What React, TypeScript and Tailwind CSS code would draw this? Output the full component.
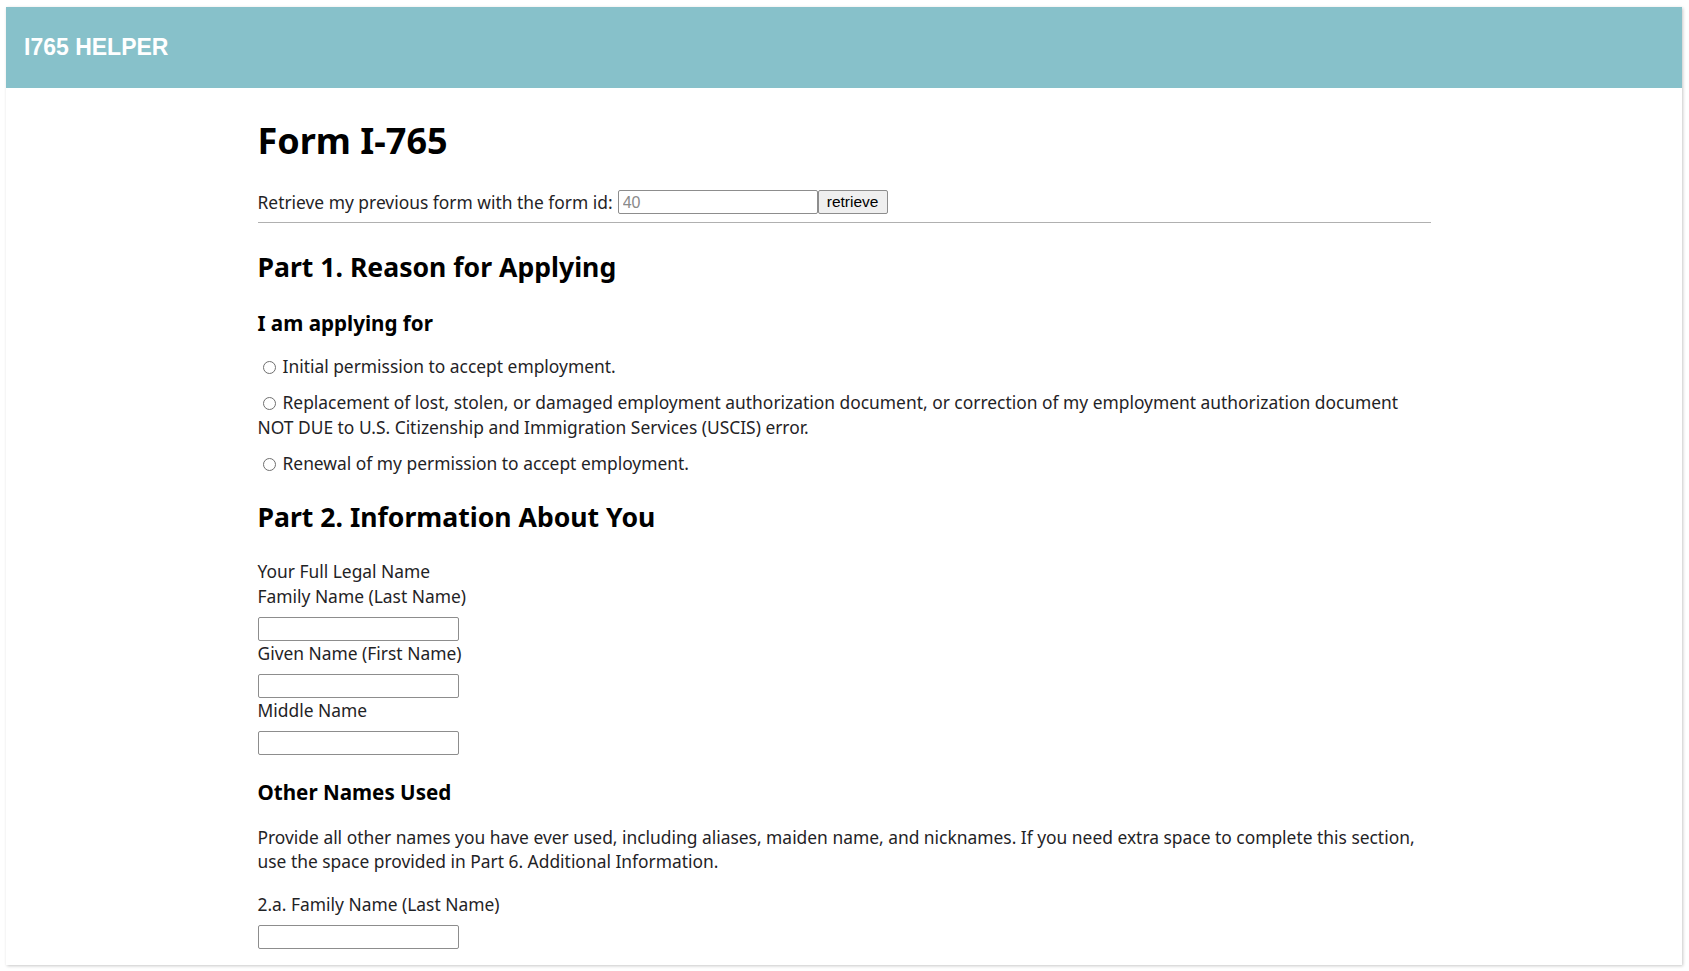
import React from "react";

const Label = ({ children, className = "" }: { children: React.ReactNode; className?: string }) => (
  <div className={className}>{children}</div>
);

const TextBox = ({ className = "" }: { className?: string }) => (
  <input
    type="text"
    className={`block w-[201px] h-[24px] border border-[#8d8d8d] rounded-[2px] bg-white px-[3px] outline-none ${className}`}
  />
);

const Radio = ({ name }: { name: string }) => (
  <input
    type="radio"
    name={name}
    className="appearance-none inline-block w-[13px] h-[13px] rounded-full border border-[#6f6f6f] bg-white align-[-1px] ml-[5px] mr-[7px] m-0"
  />
);

export default function App() {
  return (
    <div className="w-full h-[971px] overflow-hidden bg-white pt-[7px] pl-[6px] pr-[7px]">
      <div className="h-[958px] bg-white overflow-hidden shadow-[1px_1px_3px_rgba(0,0,0,0.22)]">
        <header className="h-[81px] bg-[#87c1ca] flex items-center pl-[18px]">
          <span className="font-['Liberation_Sans',Arial,sans-serif] font-bold text-[23px] text-white">
            I765 HELPER
          </span>
        </header>

        <main className="mx-auto w-[1173px] font-['Noto_Sans',sans-serif] text-[17.4px] leading-[25px] text-[#1f2326]">
          <h1 className="mt-[31px] text-[36px] leading-[44px] font-bold text-black">Form I-765</h1>

          <div className="mt-[27px] flex items-center h-[24px]">
            <span className="whitespace-nowrap">Retrieve my previous form with the form id:</span>
            <input
              type="text"
              placeholder="40"
              className="ml-[5px] w-[200px] h-[24px] border border-[#8d8d8d] rounded-[2px] px-[4px] font-['Liberation_Sans',Arial,sans-serif] text-[16px] text-[#333] placeholder:text-[#8a8a8a] outline-none"
            />
            <button className="w-[70px] h-[24px] border border-[#8d8d8d] rounded-[2px] bg-[#efefef] font-['Liberation_Sans',Arial,sans-serif] text-[15.5px] text-black leading-none">
              retrieve
            </button>
          </div>

          <hr className="mt-[8px] border-0 border-t border-[#b0b0b0]" />

          <h2 className="mt-[27px] text-[26.6px] leading-[34px] font-bold text-black">Part 1. Reason for Applying</h2>
          <h3 className="mt-[25px] text-[20.6px] leading-[28px] font-bold text-black">I am applying for</h3>

          <div className="mt-[17px]">
            <Radio name="reason" />
            Initial permission to accept employment.
          </div>
          <div className="mt-[11px] whitespace-nowrap">
            <Radio name="reason" />
            Replacement of lost, stolen, or damaged employment authorization document, or correction of my employment
            authorization document
            <br />
            NOT DUE to U.S. Citizenship and Immigration Services (USCIS) error.
          </div>
          <div className="mt-[11px]">
            <Radio name="reason" />
            Renewal of my permission to accept employment.
          </div>

          <h2 className="mt-[24px] text-[26.6px] leading-[34px] font-bold text-black">Part 2. Information About You</h2>

          <Label className="mt-[25px]">Your Full Legal Name</Label>
          <Label>Family Name (Last Name)</Label>
          <TextBox className="mt-[8px]" />
          <Label>Given Name (First Name)</Label>
          <TextBox className="mt-[8px]" />
          <Label>Middle Name</Label>
          <TextBox className="mt-[8px]" />

          <h3 className="mt-[23px] text-[20.6px] leading-[28px] font-bold text-black">Other Names Used</h3>

          <p className="mt-[19px] whitespace-nowrap leading-[24px]">
            Provide all other names you have ever used, including aliases, maiden name, and nicknames. If you need extra
            space to complete this section,
            <br />
            use the space provided in Part 6. Additional Information.
          </p>

          <Label className="mt-[19px]">2.a. Family Name (Last Name)</Label>
          <TextBox className="mt-[8px]" />
        </main>
      </div>
    </div>
  );
}
